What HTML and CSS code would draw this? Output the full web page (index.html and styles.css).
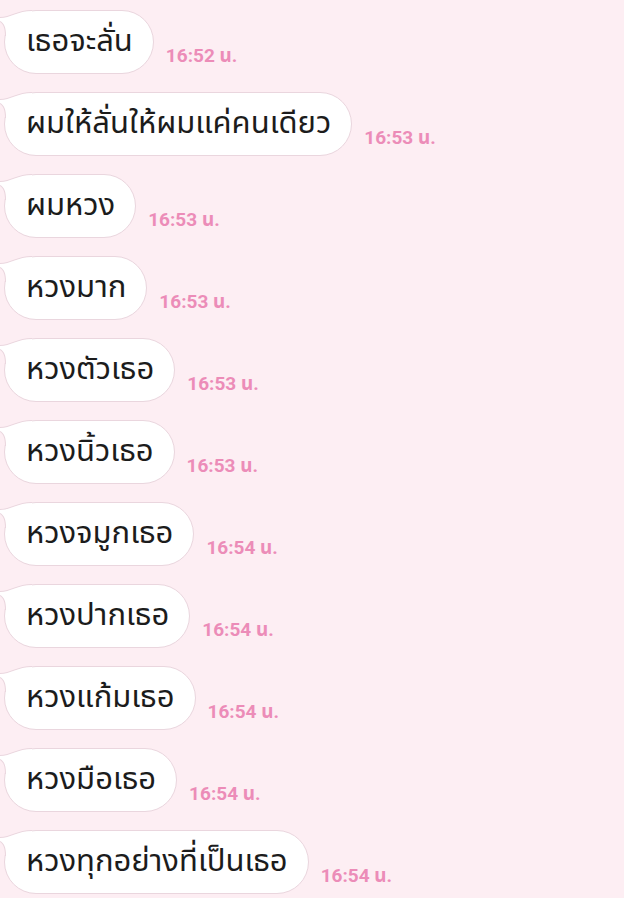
FILE: index.html
```html
<!doctype html>
<html lang="th">

  <head>
    <meta charset="utf-8">
    <meta name="viewport" content="width=device-width, initial-scale=1">
    <title>Chat</title>
    <link rel="stylesheet" href="styles.css">
  </head>

  <body>
    <main class="chat">
      <div class="row"><div class="bubble">เธอจะลั่น</div><span class="time">16:52 น.</span></div>
      <div class="row"><div class="bubble">ผมให้ลั่นให้ผมแค่คนเดียว</div><span class="time">16:53 น.</span></div>
      <div class="row"><div class="bubble">ผมหวง</div><span class="time">16:53 น.</span></div>
      <div class="row"><div class="bubble">หวงมาก</div><span class="time">16:53 น.</span></div>
      <div class="row"><div class="bubble">หวงตัวเธอ</div><span class="time">16:53 น.</span></div>
      <div class="row"><div class="bubble">หวงนิ้วเธอ</div><span class="time">16:53 น.</span></div>
      <div class="row"><div class="bubble">หวงจมูกเธอ</div><span class="time">16:54 น.</span></div>
      <div class="row"><div class="bubble">หวงปากเธอ</div><span class="time">16:54 น.</span></div>
      <div class="row"><div class="bubble">หวงแก้มเธอ</div><span class="time">16:54 น.</span></div>
      <div class="row"><div class="bubble">หวงมือเธอ</div><span class="time">16:54 น.</span></div>
      <div class="row"><div class="bubble">หวงทุกอย่างที่เป็นเธอ</div><span class="time">16:54 น.</span></div>
    </main>
  </body>

</html>
```

FILE: styles.css
```css
html,
body {
  margin: 0;
  padding: 0;
  height: 100%;
  box-sizing: border-box;
}

body {
  background: #fdeef3;
  font-family: "Noto Sans Thai", "Noto Sans", Roboto, sans-serif;
  color: #1c1c1c;
  overflow: hidden;
}

.chat {
  display: flex;
  flex-direction: column;
  gap: 18px;
  padding: 10px 0 0 4px;
}

.row {
  display: flex;
  align-items: flex-end;
  gap: 12px;
}

.bubble {
  position: relative;
  z-index: 0;
  height: 64px;
  box-sizing: border-box;
  display: flex;
  align-items: center;
  padding: 0 20px 2px 21px;
  background: #fff;
  border: 1px solid #ead6de;
  border-radius: 32px;
  font-size: 31px;
  white-space: nowrap;
}

/* tail at the top left corner */
.bubble::before,
.bubble::after {
  content: "";
  position: absolute;
  z-index: -1;
  left: -5px;
  top: -1px;
  width: 32px;
  height: 26px;
}

.bubble::before {
  background: #ead6de;
  clip-path: path("M32 0 C18 0 10 7 0 7 L0 12 C3 14 5 17 5 26 L32 26 Z");
}

.bubble::after {
  background: #fff;
  clip-path: path("M32 1 C18 1 10 8 0 8 L0 11 C4 13 6 17 6 26 L32 26 Z");
}

.time {
  font-family: Roboto, "Noto Sans Thai", sans-serif;
  font-weight: 700;
  font-size: 19px;
  color: #ec8cb8;
  margin-bottom: 3px;
}
```
